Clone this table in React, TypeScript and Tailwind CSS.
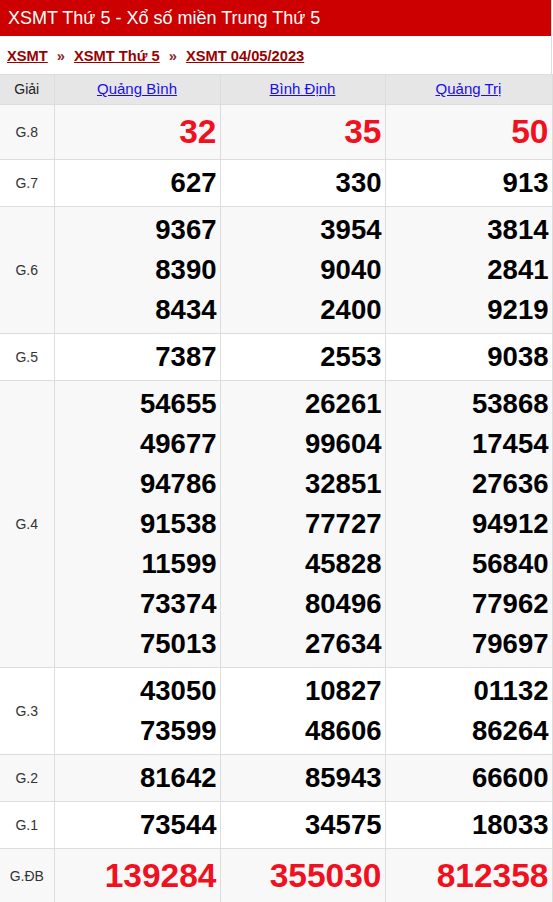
const prizes: { label: string; values: string[][]; red?: boolean }[] = [
  { label: "G.8", values: [["32"], ["35"], ["50"]], red: true },
  { label: "G.7", values: [["627"], ["330"], ["913"]] },
  {
    label: "G.6",
    values: [
      ["9367", "8390", "8434"],
      ["3954", "9040", "2400"],
      ["3814", "2841", "9219"],
    ],
  },
  { label: "G.5", values: [["7387"], ["2553"], ["9038"]] },
  {
    label: "G.4",
    values: [
      ["54655", "49677", "94786", "91538", "11599", "73374", "75013"],
      ["26261", "99604", "32851", "77727", "45828", "80496", "27634"],
      ["53868", "17454", "27636", "94912", "56840", "77962", "79697"],
    ],
  },
  {
    label: "G.3",
    values: [
      ["43050", "73599"],
      ["10827", "48606"],
      ["01132", "86264"],
    ],
  },
  { label: "G.2", values: [["81642"], ["85943"], ["66600"]] },
  { label: "G.1", values: [["73544"], ["34575"], ["18033"]] },
  { label: "G.ĐB", values: [["139284"], ["355030"], ["812358"]], red: true },
];

const provinces = ["Quảng Bình", "Bình Định", "Quảng Trị"];

export default function App() {
  return (
    <div className="w-[553px] min-h-screen bg-white font-['Liberation_Sans',Arial,sans-serif]">
      <div className="w-[552px] border-r border-[#ddd]">
        {/* Title bar */}
        <h1 className="h-9 bg-[#cc0000] pl-2 text-[18px] leading-9 text-white">
          XSMT Thứ 5 - Xổ số miền Trung Thứ 5
        </h1>

        {/* Breadcrumb */}
        <div className="flex h-[38px] items-center gap-[9px] pl-[7px] pt-[2px] text-[14.7px] font-bold text-[#990000]">
          <a href="#" className="underline">XSMT</a>
          <span className="text-[#8a2a2a]">»</span>
          <a href="#" className="underline">XSMT Thứ 5</a>
          <span className="text-[#8a2a2a]">»</span>
          <a href="#" className="underline">XSMT 04/05/2023</a>
        </div>

        {/* Results table */}
        <table className="w-[552px] table-fixed border-collapse">
          <colgroup>
            <col className="w-[54px]" />
            <col className="w-[166px]" />
            <col className="w-[165px]" />
            <col className="w-[167px]" />
          </colgroup>
          <thead>
            <tr className="h-[30px] bg-[#e6e6e6]">
              <th className="border-y border-r border-[#ddd] text-[14px] font-normal text-[#222]">Giải</th>
              {provinces.map((p) => (
                <th key={p} className="border border-[#ddd] text-[15px] font-normal">
                  <a href="#" className="text-[#1a0dee] underline">{p}</a>
                </th>
              ))}
            </tr>
          </thead>
          <tbody>
            {prizes.map((row, i) => (
              <tr key={row.label} className={i % 2 === 0 ? "bg-[#f8f8f8]" : "bg-white"}>
                <td className="border-y border-r border-[#ddd] text-center text-[14px] text-[#333]">{row.label}</td>
                {row.values.map((col, j) => (
                  <td key={j} className="border border-[#ddd] py-[3px] pl-1 pr-[3px] text-right font-bold">
                    {col.map((n) => (
                      <div
                        key={n}
                        className={
                          row.red
                            ? "text-[33.5px] leading-[48px] text-[#f0101e]"
                            : "text-[27.5px] leading-10 text-black"
                        }
                      >
                        {n}
                      </div>
                    ))}
                  </td>
                ))}
              </tr>
            ))}
          </tbody>
        </table>
      </div>
    </div>
  );
}
